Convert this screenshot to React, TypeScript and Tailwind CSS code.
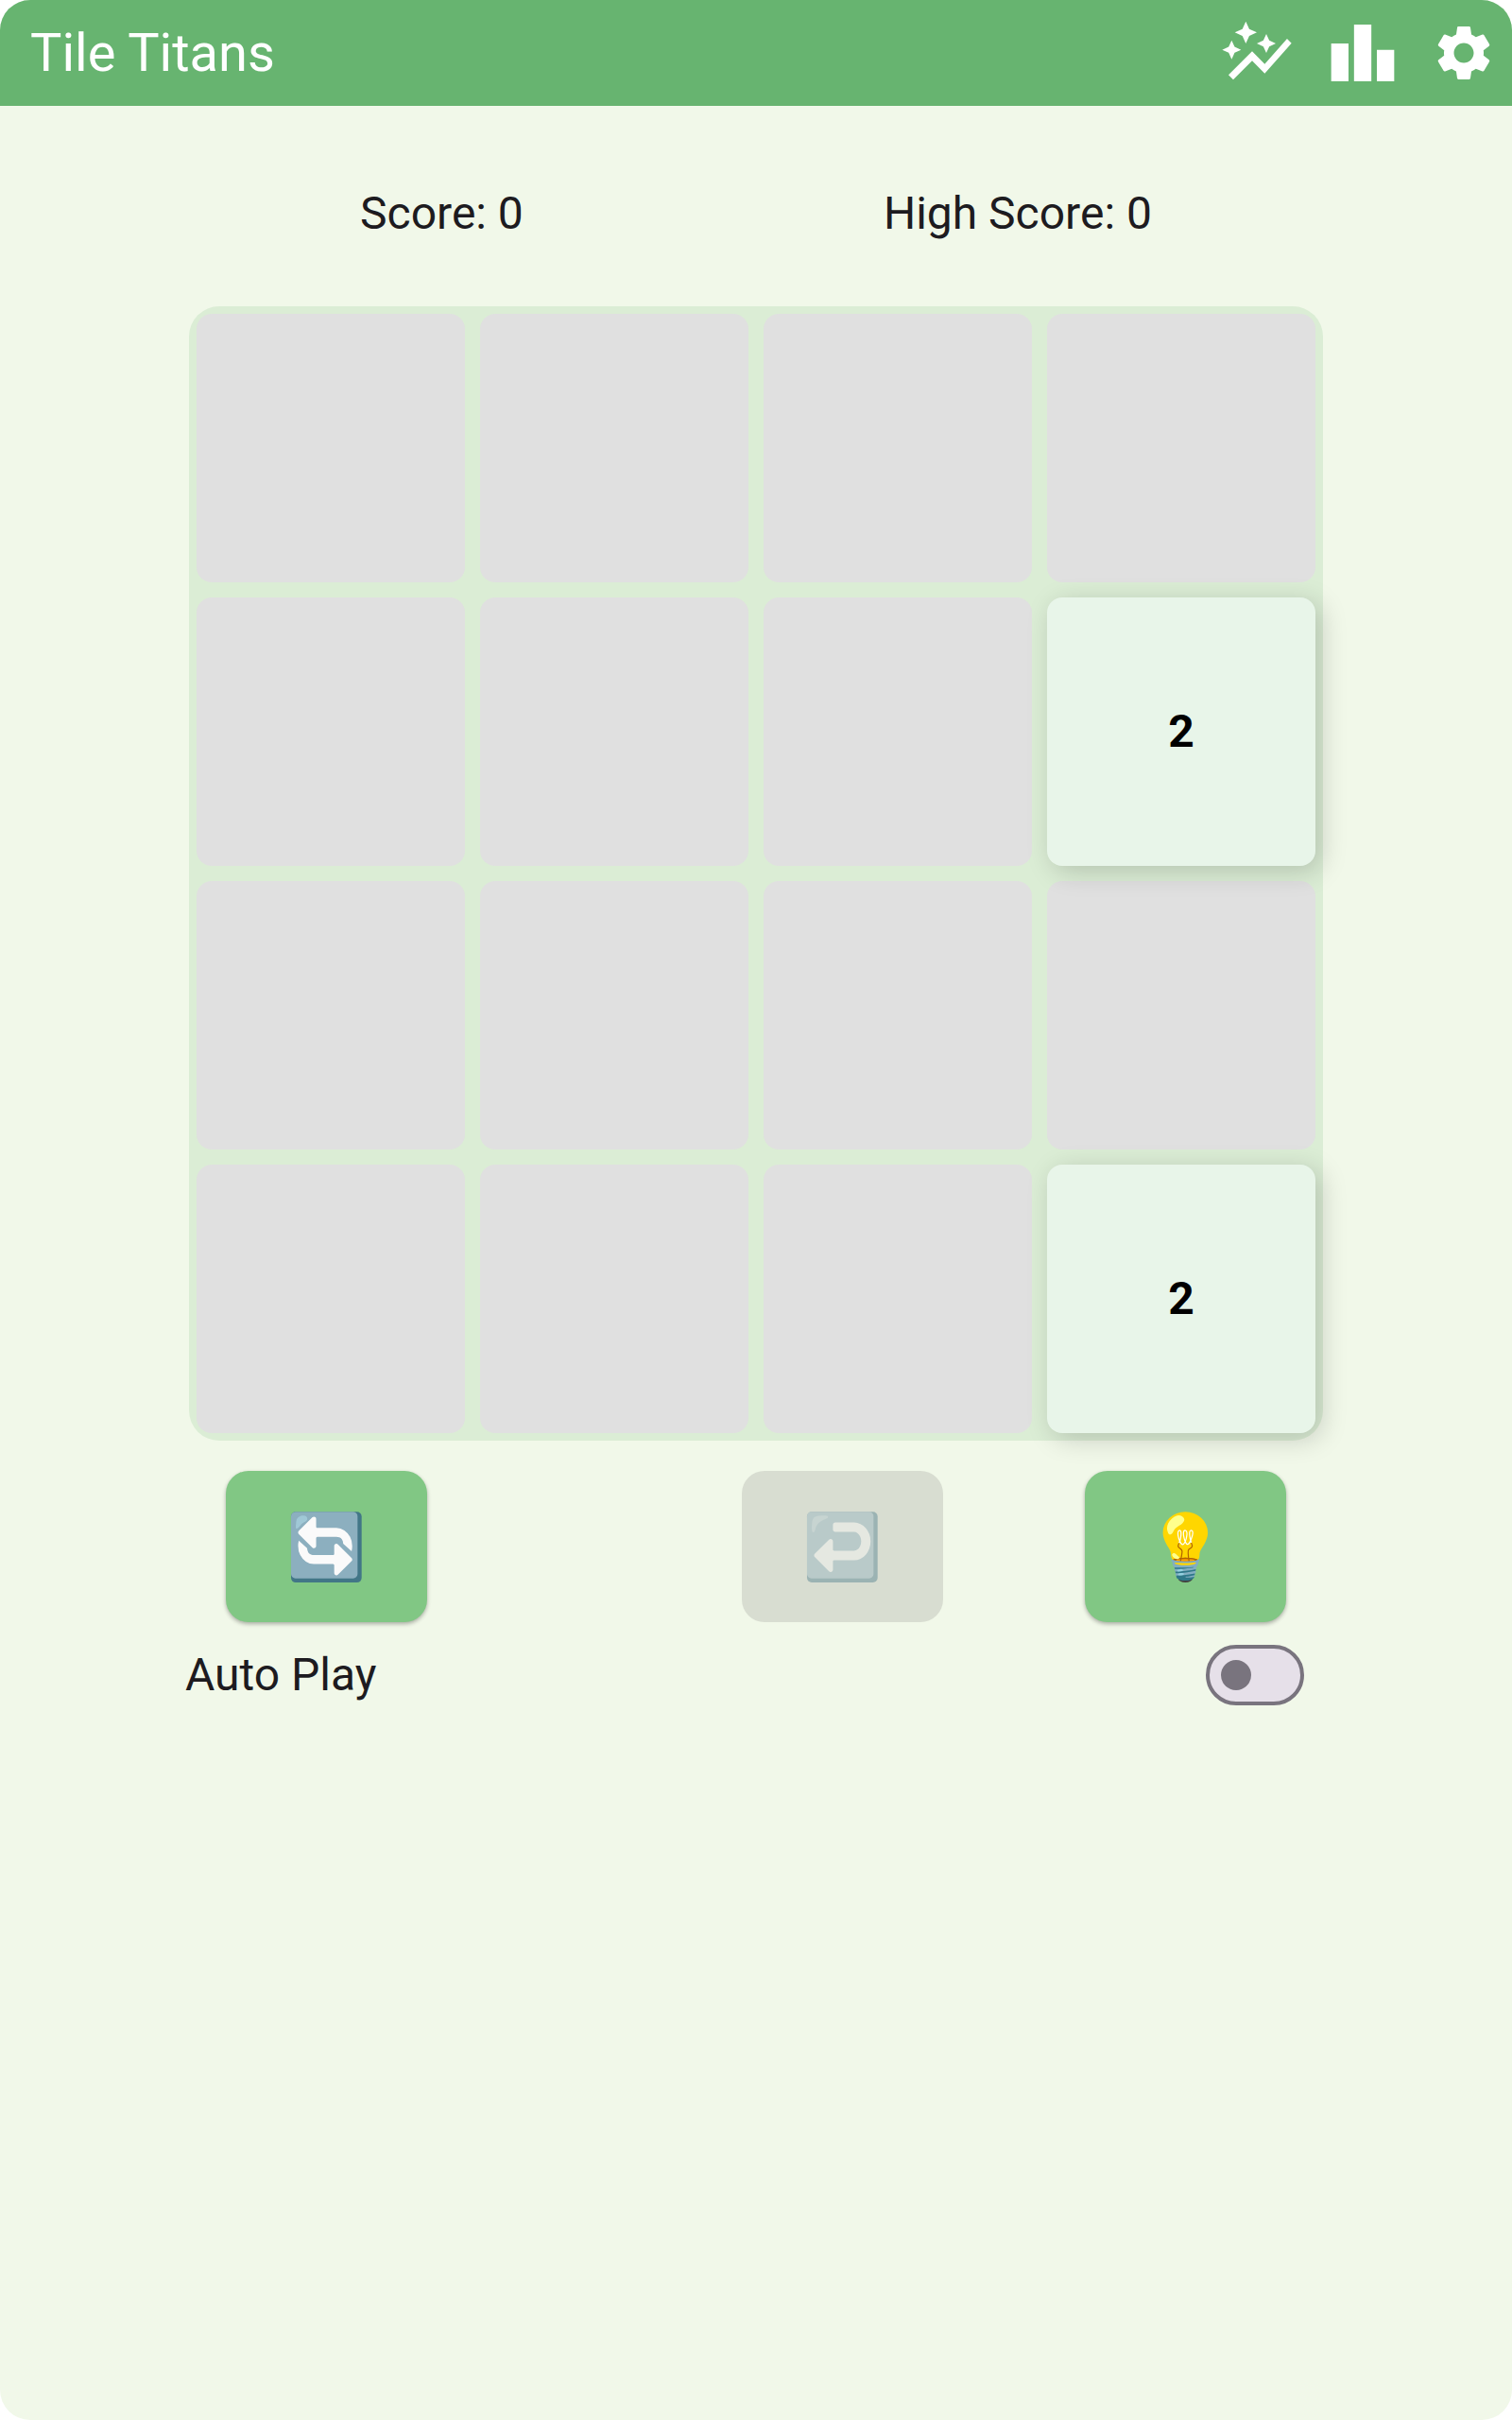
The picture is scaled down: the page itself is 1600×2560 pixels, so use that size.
import { useState } from "react";
import { MdAutoGraph, MdLeaderboard, MdSettings } from "react-icons/md";

const cells: (number | null)[] = [
  null, null, null, null,
  null, null, null, 2,
  null, null, null, null,
  null, null, null, 2,
];

function Tile({ value }: { value: number | null }) {
  if (value === null) {
    return <div className="aspect-square rounded-2xl bg-[#e0e0e0]" />;
  }
  return (
    <div className="relative z-10 flex aspect-square items-center justify-center rounded-2xl bg-[#e8f5e9] text-5xl font-bold text-black shadow-[6px_6px_28px_rgba(0,0,0,0.18)]">
      {value}
    </div>
  );
}

const actionClass =
  "flex h-40 w-[213px] items-center justify-center rounded-3xl bg-[#81c784] pt-0.5 text-[68px] leading-none shadow-[0_2px_4px_rgba(0,0,0,0.3)]";

export default function App() {
  const [autoPlay, setAutoPlay] = useState(false);

  return (
    <div className="min-h-screen bg-white font-[Roboto,sans-serif] text-[#1d1b20]">
      <div className="flex min-h-screen flex-col overflow-hidden rounded-[32px] bg-[#f1f8e9]">
        <header className="flex h-28 items-center justify-between bg-[#67b470] pr-4 pl-8 text-white">
          <h1 className="text-[56px] leading-none">Tile Titans</h1>
          <nav className="flex items-center gap-8">
            <button type="button" aria-label="Auto graph">
              <MdAutoGraph className="size-20" />
            </button>
            <button type="button" aria-label="Leaderboard">
              <MdLeaderboard className="size-20" />
            </button>
            <button type="button" aria-label="Settings">
              <MdSettings className="size-[70px]" />
            </button>
          </nav>
        </header>

        <main className="flex flex-col items-center pt-20">
          <div className="flex w-full justify-evenly text-5xl leading-[68px]">
            <p>Score: 0</p>
            <p>High Score: 0</p>
          </div>

          <div className="mt-16 grid w-3/4 grid-cols-4 gap-4 rounded-[32px] bg-[#dbedd5] p-2">
            {cells.map((value, i) => (
              <Tile key={i} value={value} />
            ))}
          </div>

          <div className="relative z-20 mt-8 flex w-3/4 px-[39px]">
            <button type="button" aria-label="Restart" className={actionClass}>
              🔄
            </button>
            <button
              type="button"
              aria-label="Undo"
              disabled
              className="mr-[150px] ml-auto flex h-40 w-[213px] items-center justify-center rounded-3xl bg-[#d8ddd1] pt-0.5 text-[68px] leading-none"
            >
              <span className="opacity-40">↩️</span>
            </button>
            <button type="button" aria-label="Hint" className={actionClass}>
              💡
            </button>
          </div>

          <label className="mt-2 flex h-24 w-[76%] items-center justify-between pr-7 pl-1 text-5xl">
            Auto Play
            <input
              type="checkbox"
              role="switch"
              checked={autoPlay}
              onChange={(e) => setAutoPlay(e.target.checked)}
              className="flex h-16 w-[104px] appearance-none items-center rounded-full border-4 border-[#79747e] bg-[#e6e0e9] px-3 before:size-8 before:rounded-full before:bg-[#79747e] checked:justify-end"
            />
          </label>
        </main>
      </div>
    </div>
  );
}
